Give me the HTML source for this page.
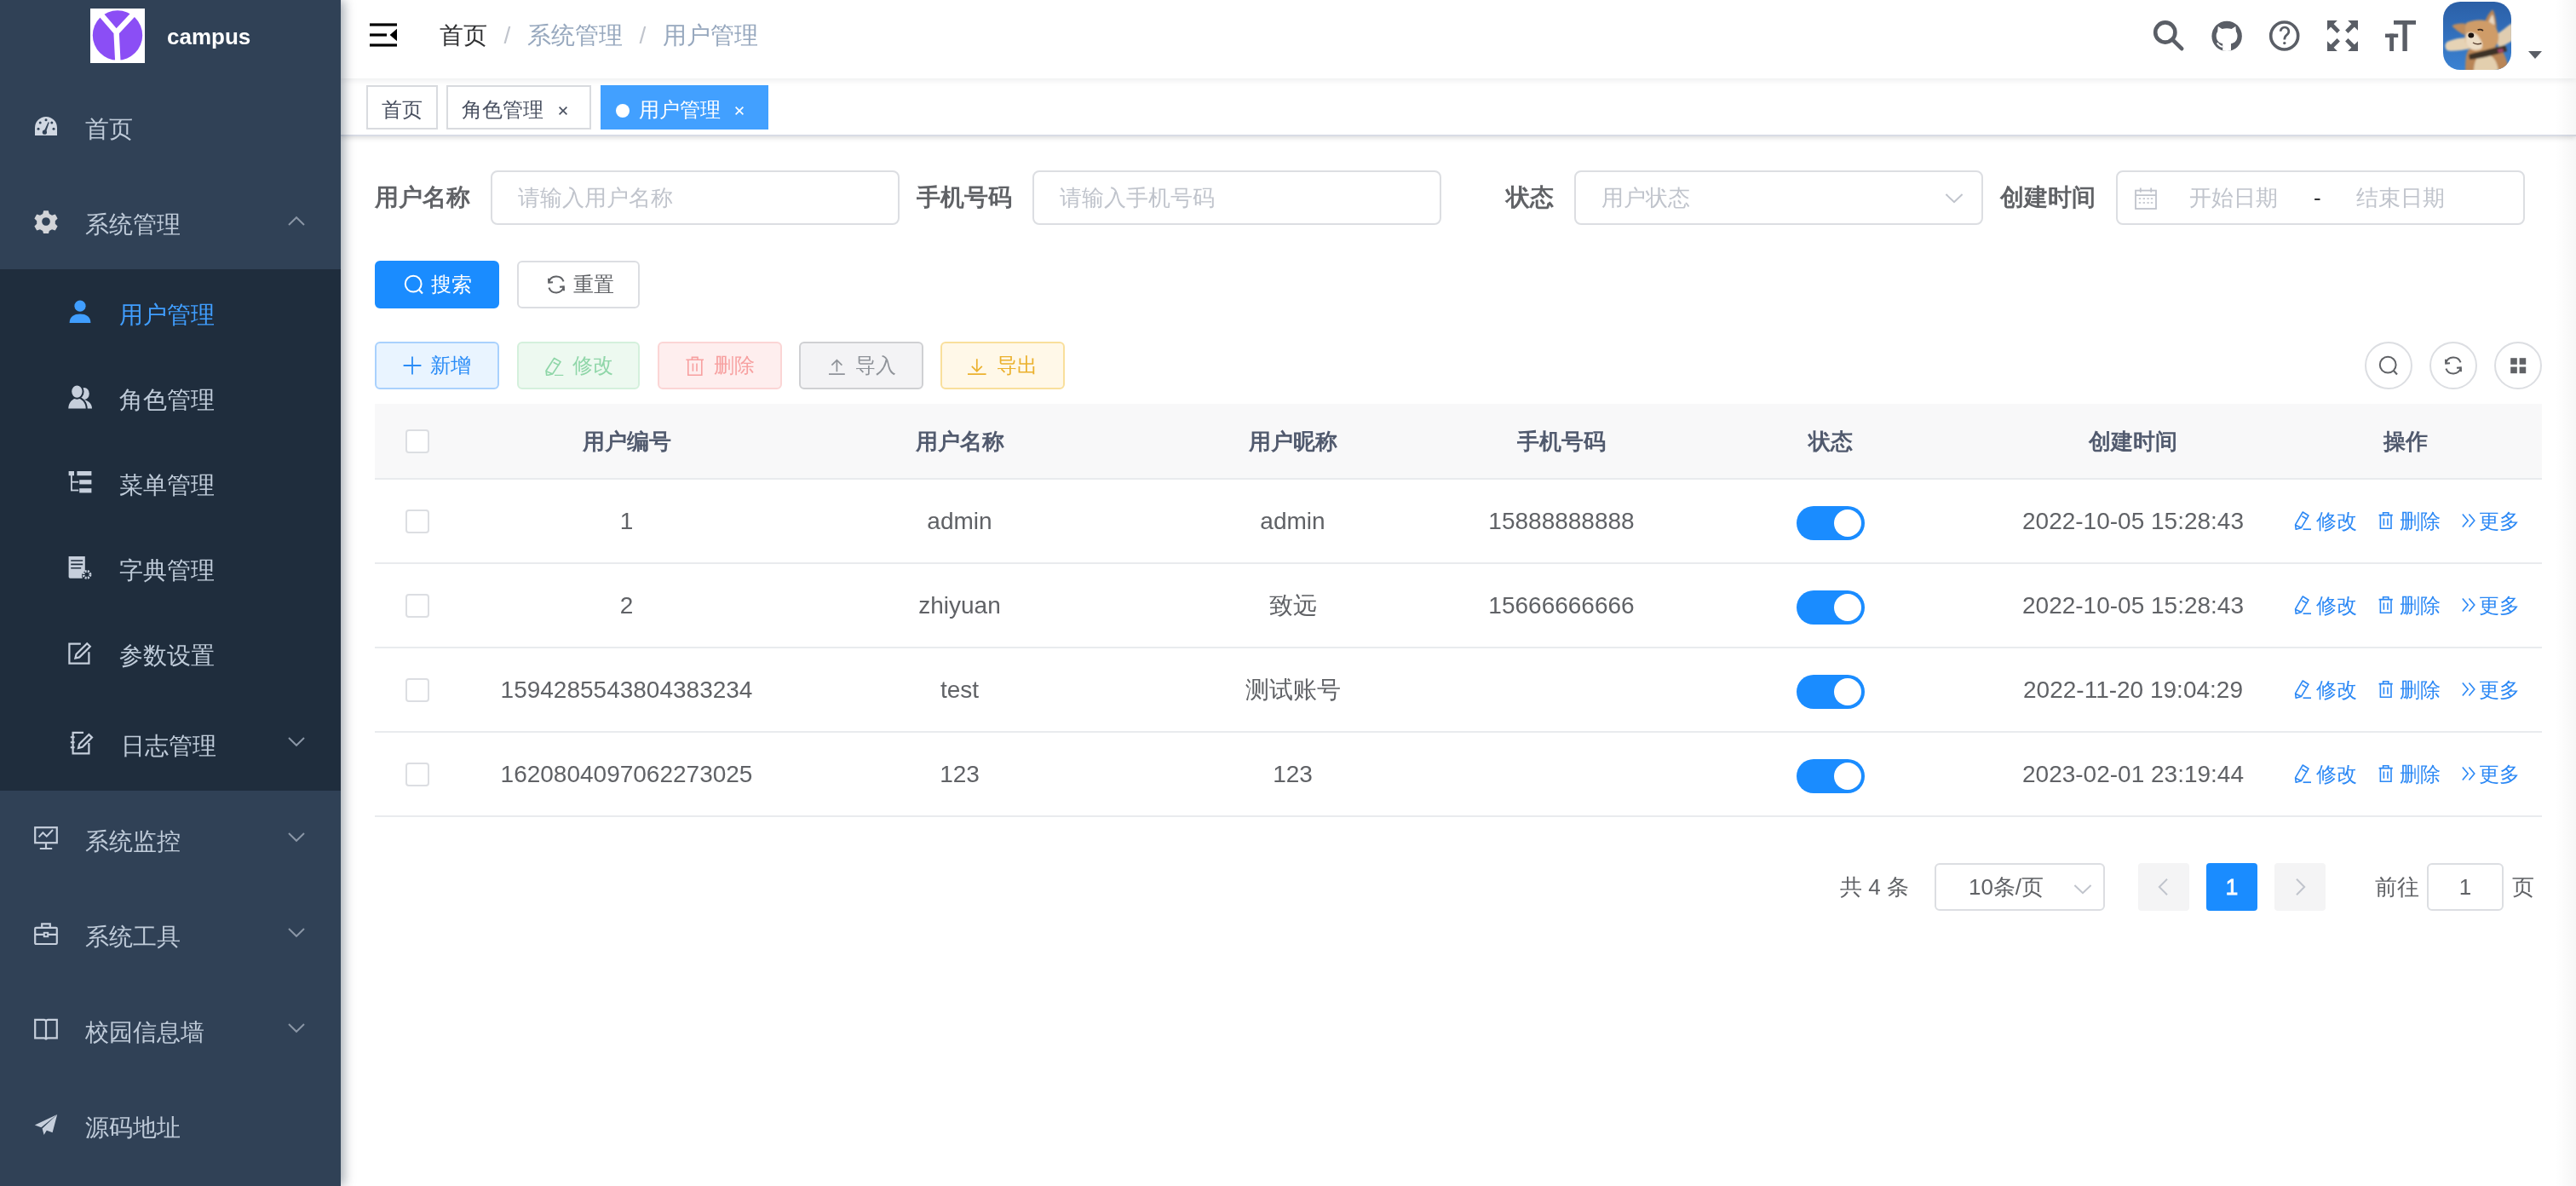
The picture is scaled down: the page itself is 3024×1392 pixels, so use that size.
<!DOCTYPE html>
<html><head><meta charset="utf-8">
<style>
*{box-sizing:border-box}
html,body{margin:0;padding:0;background:#fff;overflow:hidden;width:3024px;height:1392px}
body{font-family:"Liberation Sans",sans-serif;color:#606266;-webkit-font-smoothing:antialiased}
#app{zoom:2;will-change:transform;position:relative;width:1512px;height:696px;overflow:hidden;background:#fff}
.abs{position:absolute}
/* sidebar */
#side{position:absolute;left:0;top:0;width:200px;height:696px;background:#304156;box-shadow:2px 0 6px rgba(0,21,41,.35);z-index:5;overflow:hidden}
#sideIn{position:absolute;left:0;top:-4px;width:200px}
.logo{height:50px;line-height:50px;text-align:center;white-space:nowrap}
.logo .img{display:inline-block;width:32px;height:32px;vertical-align:middle;margin-right:12px;background:#fff}
.logo .img svg{display:block}
.logo .t{display:inline-block;vertical-align:middle;color:#fff;font-weight:bold;font-size:14px;line-height:50px}
.mi{position:relative;height:56px;line-height:56px;padding-left:20px;color:#bfcbd9;font-size:14px;white-space:nowrap}
.mi.sub{height:50px;line-height:50px;padding-left:40px;background:#1f2d3d}
.mi.sub56{height:56px;line-height:56px;padding-left:40px;background:#1f2d3d}
.mi svg.ic{position:absolute;top:50%;margin-top:-7px;width:14px;height:14px}
.mi .tx{position:absolute;left:50px;top:2px}
.mi.sub .tx,.mi.sub56 .tx{left:70px}
.mi .arr{position:absolute;right:20px;top:50%;margin-top:-6px;width:12px;height:12px}
/* navbar */
#nav{position:absolute;left:200px;top:-4px;width:1312px;height:50px;background:#fff;box-shadow:0 1px 4px rgba(0,21,41,.08);z-index:3}
#tags{position:absolute;left:200px;top:46px;width:1312px;height:34px;background:#fff;border-bottom:1px solid #d8dce5;box-shadow:0 1px 3px 0 rgba(0,0,0,.12),0 0 3px 0 rgba(0,0,0,.04);z-index:2}
.tag{position:absolute;top:4px;height:26px;line-height:27px;border:1px solid #d9dbdf;color:#495060;background:#fff;padding:0 8px;font-size:12px;white-space:nowrap}
.tag.act{background:#42a0ff;border-color:#42a0ff;color:#fff}
#main{position:absolute;left:200px;top:80px;width:1312px;height:616px;background:#fff}
.lbl{position:absolute;font-size:14px;font-weight:bold;color:#606266;line-height:32px;height:32px}
.inp{position:absolute;height:32px;border:1px solid #dcdee2;border-radius:4px;background:#fff;font-size:13px;color:#c0c4cc;line-height:30px;white-space:nowrap}
.btn{position:absolute;height:28px;border:1px solid #dcdee2;border-radius:3px;font-size:12px;line-height:26px;white-space:nowrap;color:#606266;background:#fff}
.btn svg{position:absolute;top:7px;left:15px;width:12px;height:12px}
.btn span{position:absolute;left:32px;top:0}
.cbtn{position:absolute;width:28px;height:28px;border:1px solid #dcdee2;border-radius:50%;background:#fff}
.cbtn svg{position:absolute;left:7px;top:7px;width:12px;height:12px}
table{border-collapse:collapse}
.th{position:absolute;font-size:13px;font-weight:bold;color:#515a6e;text-align:center;line-height:20px}
.td{position:absolute;font-size:14px;color:#606266;text-align:center;line-height:20px;white-space:nowrap}
.hl{position:absolute;left:20px;width:1272px;height:1px;background:#e9ebee}
.cb{position:absolute;width:14px;height:14px;border:1px solid #dcdee2;border-radius:2px;background:#fff}
.sw{position:absolute;width:40px;height:20px;border-radius:10px;background:#1a8cff}
.sw:after{content:"";position:absolute;right:2px;top:2px;width:16px;height:16px;border-radius:50%;background:#fff}
.act-l{position:absolute;font-size:12px;color:#2b88f5;line-height:14px;white-space:nowrap}
.act-l svg{position:absolute;top:1px;width:12px;height:12px}
.pg{position:absolute;font-size:13px;color:#606266;line-height:28px;white-space:nowrap}
</style></head><body><div id="app">

<!-- SIDEBAR -->
<div id="side"><div id="sideIn">
  <div class="logo"><span class="img" style="position:absolute;left:53px;top:9px"><svg width="32" height="32" viewBox="0 0 32 32"><circle cx="16" cy="15.7" r="14.6" fill="#8b4ef5"/><path d="M6.3 3.6 L15.3 14 L16.2 31.5 M25 3.6 L15.3 14" stroke="#fff" stroke-width="3.2" fill="none" stroke-linejoin="bevel"/></svg></span><span class="t" style="position:absolute;left:98px;top:0.3px;font-size:13px">campus</span></div>
  <div class="mi"><svg class="ic" viewBox="0 0 14 14"><path d="M7 1.5 A6.5 6.5 0 0 0 0.5 8 L0.5 12.5 L13.5 12.5 L13.5 8 A6.5 6.5 0 0 0 7 1.5Z" fill="#d1d8e2"/><g fill="#304156"><circle cx="2.5" cy="8.6" r=".75"/><circle cx="3.6" cy="5" r=".75"/><circle cx="7" cy="3.4" r=".75"/><circle cx="10.4" cy="5" r=".75"/><circle cx="11.5" cy="8.6" r=".75"/><circle cx="6.2" cy="10.6" r="1.3"/><path d="M5.7 10.2 L8.3 4.6 L8.9 4.9 L6.9 10.8Z"/></g></svg><span class="tx">首页</span></div>
  <div class="mi"><svg class="ic" viewBox="0 0 14 14"><path fill="#d2d4d8" fill-rule="evenodd" d="M5.6 0.6h2.8l.5 1.9 1.6.9 1.9-.6 1.4 2.4-1.4 1.4v1.8l1.4 1.4-1.4 2.4-1.9-.6-1.6.9-.5 1.9H5.6l-.5-1.9-1.6-.9-1.9.6L.2 9.8l1.4-1.4V6.6L.2 5.2l1.4-2.4 1.9.6 1.6-.9z M7 4.6a2.4 2.4 0 1 0 .01 0z"/></svg><span class="tx">系统管理</span><svg class="arr" viewBox="0 0 12 12"><path d="M1.5 8 L6 3.6 L10.5 8" stroke="#8a96a6" stroke-width="1" fill="none"/></svg></div>
  <div class="mi sub" style="color:#409eff"><svg class="ic" viewBox="0 0 14 14" style="left:40px"><circle cx="7" cy="3.6" r="3.3" fill="#409eff"/><path d="M0.8 13.5 C0.8 9.8 3.4 8.2 7 8.2 C10.6 8.2 13.2 9.8 13.2 13.5Z" fill="#409eff"/></svg><span class="tx">用户管理</span></div>
  <div class="mi sub"><svg class="ic" viewBox="0 0 14 14" style="left:40px"><g fill="#c6cfdc"><ellipse cx="9.4" cy="5" rx="3" ry="3.5"/><path d="M8 8.4 C11.4 8.6 14 10.8 14 13.7 H9Z"/></g><g fill="#c6cfdc" stroke="#1f2d3d" stroke-width="1"><path d="M-.4 14.2 C-.4 9.8 2.4 7.2 5.2 7.2 C8 7.2 10.9 9.8 10.9 14.2Z"/><ellipse cx="5.2" cy="3.8" rx="3.6" ry="4.1"/></g><path d="M1.2 13.8 C1.2 10.4 3.2 8.2 5.2 8.2" fill="none"/></svg><span class="tx">角色管理</span></div>
  <div class="mi sub"><svg class="ic" viewBox="0 0 14 14" style="left:40px"><g fill="#c6cfdc"><rect x="0.3" y="0.5" width="3.2" height="2.6"/><rect x="5.2" y="0.5" width="8.5" height="2.6"/><rect x="6.6" y="5.6" width="7.1" height="2.6"/><rect x="6.6" y="10.6" width="7.1" height="2.6"/><rect x="1.5" y="3" width=".9" height="9"/><rect x="1.5" y="6.4" width="4.6" height=".9"/><rect x="1.5" y="11.3" width="4.6" height=".9"/></g></svg><span class="tx">菜单管理</span></div>
  <div class="mi sub"><svg class="ic" viewBox="0 0 14 14" style="left:40px"><path d="M0.3 0.5h9.6v8.6a3 3 0 0 0-1.5 4.3H1.2a.9.9 0 0 1-.9-.9z" fill="#c6cfdc"/><g stroke="#1f2d3d" stroke-width=".8"><path d="M1.6 3h7M1.6 5.2h7M1.6 7.4h6"/></g><circle cx="11" cy="11.2" r="2" fill="none" stroke="#c6cfdc" stroke-width="1.4" stroke-dasharray="1 .6"/></svg><span class="tx">字典管理</span></div>
  <div class="mi sub"><svg class="ic" viewBox="0 0 14 14" style="left:40px"><path d="M7.4 1.8H0.7v11.5h11.5V6.6" fill="none" stroke="#c6cfdc" stroke-width="1.1"/><path d="M4.2 10.3l.6-2.4 6.3-6.3 1.8 1.8-6.3 6.3z" fill="none" stroke="#c6cfdc" stroke-width="1.1"/></svg><span class="tx">参数设置</span></div>
  <div class="mi sub56"><svg class="ic" viewBox="0 0 14 14" style="left:41px"><path d="M8 .9H1.8v12.3h9.4V7" fill="none" stroke="#c6cfdc" stroke-width="1.1"/><path d="M.4 3.6h2.4M.4 6.6h2.4M.4 9.6h2.4" stroke="#c6cfdc" stroke-width="1"/><path d="M5 10l.6-2.4 5.6-5.6 1.8 1.8-5.6 5.6z" fill="none" stroke="#c6cfdc" stroke-width="1.1"/></svg><span class="tx" style="left:71px">日志管理</span><svg class="arr" style="margin-top:-7px" viewBox="0 0 12 12"><path d="M1.5 4 L6 8.4 L10.5 4" stroke="#8a96a6" stroke-width="1" fill="none"/></svg></div>
  <div class="mi"><svg class="ic" viewBox="0 0 14 14"><rect x=".6" y=".6" width="12.8" height="9" fill="none" stroke="#c6cfdc" stroke-width="1.1"/><path d="M2.8 6.2l2.4-2.6 2.2 2.2 3.6-3.8" fill="none" stroke="#c6cfdc" stroke-width="1"/><path d="M7 9.6v3.2M3.4 13h7.2" stroke="#c6cfdc" stroke-width="1.1"/></svg><span class="tx">系统监控</span><svg class="arr" style="margin-top:-7px" viewBox="0 0 12 12"><path d="M1.5 4 L6 8.4 L10.5 4" stroke="#8a96a6" stroke-width="1" fill="none"/></svg></div>
  <div class="mi"><svg class="ic" viewBox="0 0 14 14"><rect x=".6" y="3.4" width="12.8" height="9.6" rx=".6" fill="none" stroke="#c6cfdc" stroke-width="1.1"/><path d="M4.6 3.4V1.2h4.8v2.2M.6 7.4h12.8" fill="none" stroke="#c6cfdc" stroke-width="1.1"/><rect x="5.9" y="6.4" width="2.2" height="2.2" fill="#304156" stroke="#c6cfdc" stroke-width="1"/></svg><span class="tx">系统工具</span><svg class="arr" style="margin-top:-7px" viewBox="0 0 12 12"><path d="M1.5 4 L6 8.4 L10.5 4" stroke="#8a96a6" stroke-width="1" fill="none"/></svg></div>
  <div class="mi"><svg class="ic" viewBox="0 0 14 14"><path d="M.6 1.4h5.2c.7 0 1.2.5 1.2 1.2 0-.7.5-1.2 1.2-1.2h5.2v10.8H8.2c-.7 0-1.2.3-1.2 1 0-.7-.5-1-1.2-1H.6z M7 2.6v10.6" fill="none" stroke="#c6cfdc" stroke-width="1.1"/></svg><span class="tx">校园信息墙</span><svg class="arr" style="margin-top:-7px" viewBox="0 0 12 12"><path d="M1.5 4 L6 8.4 L10.5 4" stroke="#8a96a6" stroke-width="1" fill="none"/></svg></div>
  <div class="mi"><svg class="ic" viewBox="0 0 14 14"><path d="M13.6 1L.4 7.2l3.8 1.4z" fill="#c6cfdc"/><path d="M13.6 1L4.8 9.2l1 3.8 1.6-2.6 3.4 1.2z" fill="#c6cfdc"/></svg><span class="tx">源码地址</span></div>
</div></div>

<!-- NAVBAR -->
<div id="nav">
  <svg class="abs" style="left:17px;top:17.5px" width="16" height="14" viewBox="0 0 16 14"><g fill="#000"><rect x="0" y=".2" width="16" height="1.6"/><rect x="0" y="6.2" width="10" height="1.6"/><rect x="0" y="12.2" width="16" height="1.6"/><path d="M11.8 7 L16 3.4 L16 10.6Z"/></g></svg>
  <div class="abs" style="left:58px;top:0;line-height:50px;font-size:14px;white-space:nowrap"><span style="color:#303133">首页</span><span style="color:#c0c4cc;margin:0 9.8px">/</span><span style="color:#97a8be">系统管理</span><span style="color:#c0c4cc;margin:0 9.8px">/</span><span style="color:#97a8be">用户管理</span></div>

  <svg class="abs" style="left:1060px;top:0" width="170" height="50" viewBox="0 0 170 50">
    <g fill="none" stroke="#5a5e66" stroke-width="2.3"><circle cx="10.9" cy="23" r="5.8"/><path d="M15.2 27.3 L20.6 32.6" stroke-linecap="round"/></g>
    <defs><clipPath id="ghc"><circle cx="47.06" cy="25.2" r="8.86"/></clipPath></defs><circle cx="47.06" cy="25.2" r="8.86" fill="#5a5e66"/><g clip-path="url(#ghc)"><path fill="#fff" d="M41.6 22.6 L41.9 19.5 L44.3 21 C46 20.5 48.1 20.5 49.8 21 L52.2 19.5 L52.5 22.6 C53.3 23.6 53.4 25 53.1 26.4 C52.6 28.5 50.9 29.4 49.5 29.6 L49.5 35 L44.6 35 L44.6 29.6 C43.2 29.4 41.5 28.5 41 26.4 C40.7 25 40.8 23.6 41.6 22.6Z"/><path d="M44.6 31.4 C43.2 31.5 42.4 30.6 41.4 29.2" stroke="#fff" stroke-width="1" fill="none"/></g>
    <circle cx="80.85" cy="25" r="8.0" fill="none" stroke="#5a5e66" stroke-width="1.8"/>
    <path d="M78.6 22.4 A2.4 2.4 0 1 1 82.2 24.5 C81.3 25.2 80.9 25.8 80.9 27.2" fill="none" stroke="#5a5e66" stroke-width="1.35"/><circle cx="80.9" cy="29.3" r=".85" fill="#5a5e66"/>
    <g fill="#5a5e66"><path d="M106 16h5.9L106 21.9z"/><path d="M124 16h-5.9L124 21.9z"/><path d="M106 34h5.9L106 28.1z"/><path d="M124 34h-5.9L124 28.1z"/></g>
    <g stroke="#5a5e66" stroke-width="2.4"><path d="M108 18 L112.6 22.6M122 18 L117.4 22.6M108 32 L112.6 27.4M122 32 L117.4 27.4"/></g>
    <g fill="#5a5e66"><rect x="145" y="16" width="13" height="2.4"/><rect x="150.2" y="16" width="2.7" height="18"/><rect x="140" y="23.8" width="7.6" height="2.2"/><rect x="142.6" y="23.8" width="2.4" height="10.2"/></g>
  </svg>
  <div class="abs" style="left:1234px;top:5px;width:40px;height:40px;border-radius:10px;overflow:hidden">
    <svg width="40" height="40" viewBox="0 0 40 40"><defs><linearGradient id="sky" x1="0" y1="0" x2="0" y2="1"><stop offset="0" stop-color="#2b5fa6"/><stop offset=".5" stop-color="#3270bd"/><stop offset="1" stop-color="#3b82d2"/></linearGradient><filter id="bl" x="-10%" y="-10%" width="120%" height="120%"><feGaussianBlur stdDeviation=".45"/></filter></defs>
    <rect width="40" height="40" fill="url(#sky)"/>
    <g filter="url(#bl)">
    <path d="M13 41 C13 34 13.5 30 15 28 L33 26.5 C36 30 38 35 38.5 41Z" fill="#b98556"/>
    <path d="M18 41 C18 35 20 31 24 30.5 C29 30.5 32 35 32.5 41Z" fill="#e3cfae"/>
    <path d="M1.5 24.5 C3 22.5 9 21.2 14.5 21 L16.5 27.5 C11 28.6 5 29.4 2.6 28.6 C1.2 27.8 1 26 1.5 24.5Z" fill="#e6d3b5"/>
    <path d="M30.5 20 C34 17.5 37.5 14.5 40.5 12.5 L40.5 23 C37 25 34.5 26.5 32.5 26.5Z" fill="#e0cdb0"/>
    <path d="M24.2 12.5 C25.5 9 27.2 6 29 4.6 C30.4 6.5 31.2 10.5 31.4 15.5Z" fill="#b98556"/>
    <path d="M26.5 12.5 C27.3 10 28.2 8.2 29 7.5 C29.8 9.2 30.2 11.5 30.3 13.8Z" fill="#e8d7c0"/>
    <path d="M13.2 13 C10 12.5 7 13 5.2 14.2 C7.5 16.5 10.3 18.6 12.5 19.4Z" fill="#c08c5c"/>
    <path d="M13.5 12.5 C17 10.8 22 10.2 26 11.5 C30.5 13 33 17 32.5 22 C32 26.5 28 29.5 23 29.8 C18 30 14.3 27.5 13.2 23.5 C12.5 20 12.4 15.5 13.5 12.5Z" fill="#cf9c68"/>
    <path d="M14 18.5 C16 17.5 19 18 20.5 20 C22.5 23 24 25 22.5 27.5 C20 29 16 28.5 14.3 26 C13 24 13 20 14 18.5Z" fill="#ecdcc4"/>
    <path d="M15 31 C20 29.5 28 27.5 36.5 25.5 L37.5 29 C30 31.5 21 33.5 15.5 34Z" fill="#3d3028"/>
    <path d="M32 28 L35 27.5 L35.5 29.5 L32.5 30Z" fill="#a0446a"/>
    </g>
    <ellipse cx="16.4" cy="19.8" rx="1.7" ry="1.5" fill="#1c1410"/>
    <path d="M20.3 16.6 C21.3 16.2 22.6 16.4 23.5 17" stroke="#3a281c" stroke-width=".9" fill="none"/>
    <path d="M17.5 24 C19 25 21 25 22.5 24.5" stroke="#5a4030" stroke-width=".7" fill="none"/>
    </svg>
  </div>
  <svg class="abs" style="left:1284px;top:34px" width="8" height="5" viewBox="0 0 8 5"><path d="M0 0h8L4 4.5z" fill="#5a5e66"/></svg>
</div>

<!-- TAGS -->
<div id="tags">
  <div class="tag" style="left:15px;width:42px">首页</div>
  <div class="tag" style="left:62px;width:85px">角色管理<svg class="abs" style="left:64px;top:10.5px" width="7" height="7" viewBox="0 0 7 7"><path d="M1.3 1.3L5.7 5.7M5.7 1.3L1.3 5.7" stroke="#495060" stroke-width=".8"/></svg></div>
  <div class="tag act" style="left:152.5px;width:98.5px"><span class="abs" style="left:8px;top:9.8px;width:8px;height:8px;border-radius:50%;background:#fff"></span><span class="abs" style="left:21.4px;top:0">用户管理</span><svg class="abs" style="left:77px;top:10.5px" width="7" height="7" viewBox="0 0 7 7"><path d="M1.3 1.3L5.7 5.7M5.7 1.3L1.3 5.7" stroke="#fff" stroke-width=".8"/></svg></div>
</div>

<!-- MAIN -->
<div id="main">
  <!-- form row -->
  <div class="lbl" style="left:20px;top:20px;width:68px;text-align:right;padding-right:12px">用户名称</div>
  <div class="inp" style="left:88px;top:20px;width:240px;padding-left:15px">请输入用户名称</div>
  <div class="lbl" style="left:338px;top:20px;width:68px;text-align:right;padding-right:12px">手机号码</div>
  <div class="inp" style="left:406px;top:20px;width:240px;padding-left:15px">请输入手机号码</div>
  <div class="lbl" style="left:656px;top:20px;width:68px;text-align:right;padding-right:12px">状态</div>
  <div class="inp" style="left:724px;top:20px;width:240px;padding-left:15px">用户状态<svg class="abs" style="right:10px;top:9px" width="12" height="12" viewBox="0 0 12 12"><path d="M1.2 4 L6 8.6 L10.8 4" stroke="#c0c4cc" stroke-width="1" fill="none"/></svg></div>
  <div class="lbl" style="left:974px;top:20px;width:68px;text-align:right;padding-right:12px">创建时间</div>
  <div class="inp" style="left:1042px;top:20px;width:240px">
    <svg class="abs" style="left:10px;top:9px" width="13" height="13" viewBox="0 0 13 13"><g fill="none" stroke="#c0c4cc" stroke-width=".9"><rect x=".5" y="1.8" width="12" height="10.7"/><path d="M.5 4.6h12M3.4 .3v2.6M9.6 .3v2.6"/></g><g fill="#c0c4cc"><rect x="2.4" y="6.2" width="1.2" height=".8"/><rect x="4.8" y="6.2" width="1.2" height=".8"/><rect x="7.2" y="6.2" width="1.2" height=".8"/><rect x="9.4" y="6.2" width="1.2" height=".8"/><rect x="2.4" y="8.6" width="1.2" height=".8"/><rect x="4.8" y="8.6" width="1.2" height=".8"/><rect x="7.2" y="8.6" width="1.2" height=".8"/><rect x="9.4" y="8.6" width="1.2" height=".8"/></g></svg>
    <span class="abs" style="left:42px;top:0">开始日期</span>
    <span class="abs" style="left:115px;top:0;color:#303133">-</span>
    <span class="abs" style="left:140px;top:0">结束日期</span>
  </div>
  <!-- search buttons -->
  <div class="btn" style="left:20px;top:73px;width:73px;background:#1a8cff;border-color:#1a8cff;color:#fff"><svg viewBox="0 0 12 12" style="left:16px"><circle cx="5.6" cy="5.6" r="4.7" fill="none" stroke="#fff" stroke-width="1"/><path d="M8.9 9 L11 11.2" stroke="#fff" stroke-width="1.1"/></svg><span style="left:32px">搜索</span></div>
  <div class="btn" style="left:103.7px;top:73px;width:72px"><svg viewBox="0 0 12 12" style="left:16px"><path d="M10.3 4.2 A4.6 4.6 0 0 0 1.6 4.6" fill="none" stroke="#606266" stroke-width="1"/><path d="M1.5 2.4 L1.6 4.8 L4 4.6" fill="none" stroke="#606266" stroke-width="1"/><path d="M1.7 7.8 A4.6 4.6 0 0 0 10.4 7.4" fill="none" stroke="#606266" stroke-width="1"/><path d="M10.5 9.6 L10.4 7.2 L8 7.4" fill="none" stroke="#606266" stroke-width="1"/></svg><span style="left:32px">重置</span></div>
  <!-- toolbar -->
  <div class="btn" style="left:20px;top:120.5px;width:73px;background:#e9f4ff;border-color:#a9d1fd;color:#2a8cf7"><svg viewBox="0 0 12 12" style="left:15.2px"><path d="M6 .8v10.4M.8 6h10.4" stroke="#2a8cf7" stroke-width=".9"/></svg><span style="left:31.3px">新增</span></div>
  <div class="btn" style="left:103.7px;top:120.5px;width:72px;background:#edf9f0;border-color:#d4f0dc;color:#8fd6a8"><svg viewBox="0 0 12 12" style="left:15.2px"><g transform="translate(.5,1.6) scale(1.1,1) translate(-4.77,-.37)"><path d="M9.14 .5 L12.5 2.6 L8.27 9.7 L5.12 10.6 L4.8 7.9 Z M8.7 2.9 L11.8 4.7 M5 8.2 L8.1 9.6" fill="none" stroke="#8fd6a8" stroke-width=".8" stroke-linejoin="round"/><path d="M9.3 10.6 H14" stroke="#8fd6a8" stroke-width=".85"/></g></svg><span style="left:31.3px">修改</span></div>
  <div class="btn" style="left:186px;top:120.5px;width:73px;background:#feeeee;border-color:#fbd5d5;color:#f7a0a0"><svg viewBox="0 0 12 12" style="left:15.2px"><path d="M.7 2.6h10.3M4.2 2.6V1.2h3.3v1.4M1.9 2.6v9.1h8V2.6M4.7 4.8v4.6M7 4.8v4.6" fill="none" stroke="#f7a0a0" stroke-width=".8"/></svg><span style="left:32.2px">删除</span></div>
  <div class="btn" style="left:269px;top:120.5px;width:73px;background:#f3f3f5;border-color:#cfd0d3;color:#8f9399"><svg viewBox="0 0 12 12" style="left:15.2px"><path d="M6.2 3v6.6M3.2 5.8 L6.2 2.8 L9.2 5.8M1.5 11.1h9.4" fill="none" stroke="#8f9399" stroke-width=".85"/></svg><span style="left:32.2px">导入</span></div>
  <div class="btn" style="left:352px;top:120.5px;width:73px;background:#fff8e8;border-color:#f9df9c;color:#ebb12e"><svg viewBox="0 0 12 12" style="left:15.2px"><path d="M5.4 2.1v7.2M2.4 6.4 L5.4 9.4 L8.4 6.4M0 11.1h10.8" fill="none" stroke="#ebb12e" stroke-width=".85"/></svg><span style="left:31.9px">导出</span></div>
  <div class="cbtn" style="left:1188px;top:120.5px"><svg viewBox="0 0 12 12"><circle cx="5.6" cy="5.6" r="4.7" fill="none" stroke="#606266" stroke-width="1"/><path d="M8.9 9 L11 11.2" stroke="#606266" stroke-width="1.1"/></svg></div>
  <div class="cbtn" style="left:1226px;top:120.5px"><svg viewBox="0 0 12 12"><path d="M10.3 4.2 A4.6 4.6 0 0 0 1.6 4.6" fill="none" stroke="#606266" stroke-width="1"/><path d="M1.5 2.4 L1.6 4.8 L4 4.6" fill="none" stroke="#606266" stroke-width="1"/><path d="M1.7 7.8 A4.6 4.6 0 0 0 10.4 7.4" fill="none" stroke="#606266" stroke-width="1"/><path d="M10.5 9.6 L10.4 7.2 L8 7.4" fill="none" stroke="#606266" stroke-width="1"/></svg></div>
  <div class="cbtn" style="left:1264px;top:120.5px"><svg viewBox="0 0 12 12"><g fill="#606266"><rect x="1.6" y="1.6" width="3.8" height="3.8"/><rect x="6.8" y="1.6" width="3.8" height="3.8"/><rect x="1.6" y="6.8" width="3.8" height="3.8"/><rect x="6.8" y="6.8" width="3.8" height="3.8"/></g></svg></div>
  <!-- table -->
  <div class="abs" style="left:20px;top:157px;width:1272px;height:44px;background:#f8f8f9"></div>
  <div class="hl" style="top:200.5px"></div>
  <div class="hl" style="top:250.0px"></div>
  <div class="hl" style="top:299.5px"></div>
  <div class="hl" style="top:349.0px"></div>
  <div class="hl" style="top:398.5px"></div>
  <div class="cb" style="left:38px;top:172px"></div>
  <div class="th" style="left:70px;top:157px;width:195.5px;line-height:44px">用户编号</div>
  <div class="th" style="left:265.5px;top:157px;width:195.5px;line-height:44px">用户名称</div>
  <div class="th" style="left:461px;top:157px;width:195.5px;line-height:44px">用户昵称</div>
  <div class="th" style="left:656.5px;top:157px;width:120px;line-height:44px">手机号码</div>
  <div class="th" style="left:776.5px;top:157px;width:195.5px;line-height:44px">状态</div>
  <div class="th" style="left:972px;top:157px;width:160px;line-height:44px">创建时间</div>
  <div class="th" style="left:1132px;top:157px;width:160px;line-height:44px">操作</div>
  <div class="cb" style="left:38px;top:218.75px"></div>
  <div class="td" style="left:70px;top:201.0px;width:195.5px;line-height:49.5px">1</div>
  <div class="td" style="left:265.5px;top:201.0px;width:195.5px;line-height:49.5px">admin</div>
  <div class="td" style="left:461px;top:201.0px;width:195.5px;line-height:49.5px">admin</div>
  <div class="td" style="left:656.5px;top:201.0px;width:120px;line-height:49.5px">15888888888</div>
  <div class="sw" style="left:854.6px;top:216.85px"></div>
  <div class="td" style="left:972px;top:201.0px;width:160px;line-height:49.5px">2022-10-05 15:28:43</div>
  <div class="act-l" style="left:1142.5px;top:218.75px"><svg viewBox="0 0 16 12" style="left:0;width:16px"><path d="M9.14 .5 L12.5 2.6 L8.27 9.7 L5.12 10.6 L4.8 7.9 Z M8.7 2.9 L11.8 4.7 M5 8.2 L8.1 9.6" fill="none" stroke="#2b88f5" stroke-width=".8" stroke-linejoin="round"/><path d="M9.3 10.6 H14" stroke="#2b88f5" stroke-width=".85"/></svg><span style="margin-left:17px">修改</span></div>
  <div class="act-l" style="left:1191.5px;top:218.75px"><svg viewBox="0 0 16 12" style="left:0;width:16px"><path d="M4.8 2.3 H12.9 M7.3 2.3 V.9 H10.4 V2.3 M5.7 2.3 V10.1 H12 V2.3 M7.7 4.3 V8.4 M10 4.3 V8.4" fill="none" stroke="#2b88f5" stroke-width=".8"/></svg><span style="margin-left:17px">删除</span></div>
  <div class="act-l" style="left:1238px;top:218.75px"><svg viewBox="0 0 16 12" style="left:0;width:16px"><path d="M7.4 1.8 L10.6 5.55 L7.4 9.3 M11.2 1.8 L14.4 5.55 L11.2 9.3" fill="none" stroke="#2b88f5" stroke-width=".8"/></svg><span style="margin-left:17px">更多</span></div>
  <div class="cb" style="left:38px;top:268.25px"></div>
  <div class="td" style="left:70px;top:250.5px;width:195.5px;line-height:49.5px">2</div>
  <div class="td" style="left:265.5px;top:250.5px;width:195.5px;line-height:49.5px">zhiyuan</div>
  <div class="td" style="left:461px;top:250.5px;width:195.5px;line-height:49.5px">致远</div>
  <div class="td" style="left:656.5px;top:250.5px;width:120px;line-height:49.5px">15666666666</div>
  <div class="sw" style="left:854.6px;top:266.35px"></div>
  <div class="td" style="left:972px;top:250.5px;width:160px;line-height:49.5px">2022-10-05 15:28:43</div>
  <div class="act-l" style="left:1142.5px;top:268.25px"><svg viewBox="0 0 16 12" style="left:0;width:16px"><path d="M9.14 .5 L12.5 2.6 L8.27 9.7 L5.12 10.6 L4.8 7.9 Z M8.7 2.9 L11.8 4.7 M5 8.2 L8.1 9.6" fill="none" stroke="#2b88f5" stroke-width=".8" stroke-linejoin="round"/><path d="M9.3 10.6 H14" stroke="#2b88f5" stroke-width=".85"/></svg><span style="margin-left:17px">修改</span></div>
  <div class="act-l" style="left:1191.5px;top:268.25px"><svg viewBox="0 0 16 12" style="left:0;width:16px"><path d="M4.8 2.3 H12.9 M7.3 2.3 V.9 H10.4 V2.3 M5.7 2.3 V10.1 H12 V2.3 M7.7 4.3 V8.4 M10 4.3 V8.4" fill="none" stroke="#2b88f5" stroke-width=".8"/></svg><span style="margin-left:17px">删除</span></div>
  <div class="act-l" style="left:1238px;top:268.25px"><svg viewBox="0 0 16 12" style="left:0;width:16px"><path d="M7.4 1.8 L10.6 5.55 L7.4 9.3 M11.2 1.8 L14.4 5.55 L11.2 9.3" fill="none" stroke="#2b88f5" stroke-width=".8"/></svg><span style="margin-left:17px">更多</span></div>
  <div class="cb" style="left:38px;top:317.75px"></div>
  <div class="td" style="left:70px;top:300.0px;width:195.5px;line-height:49.5px">1594285543804383234</div>
  <div class="td" style="left:265.5px;top:300.0px;width:195.5px;line-height:49.5px">test</div>
  <div class="td" style="left:461px;top:300.0px;width:195.5px;line-height:49.5px">测试账号</div>
  <div class="td" style="left:656.5px;top:300.0px;width:120px;line-height:49.5px"></div>
  <div class="sw" style="left:854.6px;top:315.85px"></div>
  <div class="td" style="left:972px;top:300.0px;width:160px;line-height:49.5px">2022-11-20 19:04:29</div>
  <div class="act-l" style="left:1142.5px;top:317.75px"><svg viewBox="0 0 16 12" style="left:0;width:16px"><path d="M9.14 .5 L12.5 2.6 L8.27 9.7 L5.12 10.6 L4.8 7.9 Z M8.7 2.9 L11.8 4.7 M5 8.2 L8.1 9.6" fill="none" stroke="#2b88f5" stroke-width=".8" stroke-linejoin="round"/><path d="M9.3 10.6 H14" stroke="#2b88f5" stroke-width=".85"/></svg><span style="margin-left:17px">修改</span></div>
  <div class="act-l" style="left:1191.5px;top:317.75px"><svg viewBox="0 0 16 12" style="left:0;width:16px"><path d="M4.8 2.3 H12.9 M7.3 2.3 V.9 H10.4 V2.3 M5.7 2.3 V10.1 H12 V2.3 M7.7 4.3 V8.4 M10 4.3 V8.4" fill="none" stroke="#2b88f5" stroke-width=".8"/></svg><span style="margin-left:17px">删除</span></div>
  <div class="act-l" style="left:1238px;top:317.75px"><svg viewBox="0 0 16 12" style="left:0;width:16px"><path d="M7.4 1.8 L10.6 5.55 L7.4 9.3 M11.2 1.8 L14.4 5.55 L11.2 9.3" fill="none" stroke="#2b88f5" stroke-width=".8"/></svg><span style="margin-left:17px">更多</span></div>
  <div class="cb" style="left:38px;top:367.25px"></div>
  <div class="td" style="left:70px;top:349.5px;width:195.5px;line-height:49.5px">1620804097062273025</div>
  <div class="td" style="left:265.5px;top:349.5px;width:195.5px;line-height:49.5px">123</div>
  <div class="td" style="left:461px;top:349.5px;width:195.5px;line-height:49.5px">123</div>
  <div class="td" style="left:656.5px;top:349.5px;width:120px;line-height:49.5px"></div>
  <div class="sw" style="left:854.6px;top:365.35px"></div>
  <div class="td" style="left:972px;top:349.5px;width:160px;line-height:49.5px">2023-02-01 23:19:44</div>
  <div class="act-l" style="left:1142.5px;top:367.25px"><svg viewBox="0 0 16 12" style="left:0;width:16px"><path d="M9.14 .5 L12.5 2.6 L8.27 9.7 L5.12 10.6 L4.8 7.9 Z M8.7 2.9 L11.8 4.7 M5 8.2 L8.1 9.6" fill="none" stroke="#2b88f5" stroke-width=".8" stroke-linejoin="round"/><path d="M9.3 10.6 H14" stroke="#2b88f5" stroke-width=".85"/></svg><span style="margin-left:17px">修改</span></div>
  <div class="act-l" style="left:1191.5px;top:367.25px"><svg viewBox="0 0 16 12" style="left:0;width:16px"><path d="M4.8 2.3 H12.9 M7.3 2.3 V.9 H10.4 V2.3 M5.7 2.3 V10.1 H12 V2.3 M7.7 4.3 V8.4 M10 4.3 V8.4" fill="none" stroke="#2b88f5" stroke-width=".8"/></svg><span style="margin-left:17px">删除</span></div>
  <div class="act-l" style="left:1238px;top:367.25px"><svg viewBox="0 0 16 12" style="left:0;width:16px"><path d="M7.4 1.8 L10.6 5.55 L7.4 9.3 M11.2 1.8 L14.4 5.55 L11.2 9.3" fill="none" stroke="#2b88f5" stroke-width=".8"/></svg><span style="margin-left:17px">更多</span></div>
  <div class="pg" style="left:880px;top:426.5px">共 4 条</div>
  <div class="abs" style="left:935.5px;top:426.5px;width:100px;height:28px;border:1px solid #dcdee2;border-radius:3px;font-size:13px;line-height:26px;color:#606266;text-align:center;padding-right:16px">10条/页<svg class="abs" style="right:6px;top:8px" width="12" height="12" viewBox="0 0 12 12"><path d="M1.2 4 L6 8.6 L10.8 4" stroke="#c0c4cc" stroke-width="1" fill="none"/></svg></div>
  <div class="abs" style="left:1055px;top:426.5px;width:30px;height:28px;background:#f4f4f5;border-radius:2px"><svg class="abs" style="left:9px;top:8px" width="12" height="12" viewBox="0 0 12 12"><path d="M8 1.4 L3.4 6 L8 10.6" stroke="#c0c4cc" stroke-width="1" fill="none"/></svg></div>
  <div class="abs" style="left:1095px;top:426.5px;width:30px;height:28px;background:#1a8cff;border-radius:2px;color:#fff;font-size:13px;font-weight:normal;-webkit-text-stroke:.45px #fff;text-align:center;line-height:28px">1</div>
  <div class="abs" style="left:1135px;top:426.5px;width:30px;height:28px;background:#f4f4f5;border-radius:2px"><svg class="abs" style="left:9px;top:8px" width="12" height="12" viewBox="0 0 12 12"><path d="M4 1.4 L8.6 6 L4 10.6" stroke="#c0c4cc" stroke-width="1" fill="none"/></svg></div>
  <div class="pg" style="left:1194px;top:426.5px">前往</div>
  <div class="abs" style="left:1224.5px;top:426.5px;width:45px;height:28px;border:1px solid #dcdee2;border-radius:3px;font-size:13px;line-height:26px;color:#606266;text-align:center">1</div>
  <div class="pg" style="left:1274.5px;top:426.5px">页</div>
</div>

<div class="abs" style="right:0;top:0;width:12px;height:696px;background:linear-gradient(to right,rgba(0,0,0,0),rgba(0,0,0,.035));z-index:20;pointer-events:none"></div>
</div></body></html>
